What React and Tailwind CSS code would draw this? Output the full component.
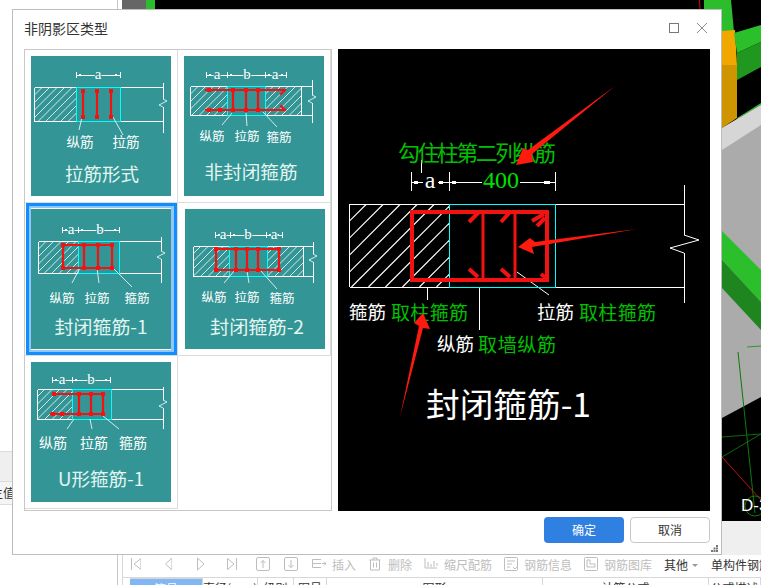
const RED = '#f21212'
const CYAN = '#00ffff'
const TEAL = '#339595'
const SERIF = "'Liberation Serif', serif"

const cards = [
  {
    title: '拉筋形式', titleX: 71, titleY: 117, titleW: 74,
    wall: [3.5, 132, 31, 65], cyan: [45, 89], hatch: [[3.5, 45]],
    post: [132, 27, 77], breakY: 47,
    dimY: 19, ticks: [45, 89], dims: [['a', 67]],
    labels: [['纵筋', 49, 85], ['拉筋', 95, 85]], labelSize: 13.5,
    leaders: [[51, 61, 48, 74], [82, 61, 92, 79]],
    ties: [[52, 35, 52, 61], [66, 35, 66, 61], [80, 35, 80, 61]],
  },
  {
    title: '非封闭箍筋', titleX: 67, titleY: 115, titleW: 93,
    wall: [6.5, 128, 30, 59], wallEnd: 117.5, cyan: [43.5, 81.5], hatch: [[6.5, 43.5], [81.5, 117.5]],
    post: [128, 24, 67], breakY: 43,
    dimY: 19, ticks: [22, 43, 81, 102], dims: [['a', 33], ['b', 63], ['a', 91]],
    labels: [['纵筋', 28, 79], ['拉筋', 63, 79], ['箍筋', 95, 80]], labelSize: 12.5,
    leaders: [[48, 57, 38, 69], [62, 57, 63, 70], [79, 56, 93, 71]],
    ties: [[22, 34, 101, 34], [22, 54, 101, 54], [49, 34, 49, 54], [62, 34, 62, 54], [74, 34, 74, 54], [101, 34, 97, 38], [101, 54, 97, 50]],
    marks: [[25, 34], [25, 54], [36, 54]],
  },
  {
    title: '封闭箍筋-1', titleX: 70, titleY: 117, titleW: 93, selected: true,
    wall: [7.5, 130, 32, 64], cyan: [47, 88], hatch: [[7.5, 47]],
    post: [130, 28, 74], breakY: 46,
    dimY: 21, ticks: [31, 47, 88], dims: [['a', 40], ['b', 69]],
    labels: [['纵筋', 31, 88], ['拉筋', 66, 88], ['箍筋', 106, 88]], labelSize: 12.5,
    leaders: [[49, 59, 41, 74], [66, 59, 68, 74], [82, 59, 101, 78]],
    ties: [[32, 36, 81, 36], [32, 59, 81, 59], [32, 36, 32, 59], [81, 36, 81, 59], [53, 36, 53, 59], [67, 36, 67, 59]],
  },
  {
    title: '封闭箍筋-2', titleX: 72, titleY: 117, titleW: 94, nudge: true,
    wall: [8, 128, 37, 67], wallEnd: 118, cyan: [44, 82], hatch: [[8, 44], [82, 118]],
    post: [128, 33, 74], breakY: 49,
    dimY: 26, ticks: [30, 45, 81, 97], dims: [['a', 38], ['b', 63], ['a', 89]],
    labels: [['纵筋', 29, 87], ['拉筋', 62, 87], ['箍筋', 97, 88]], labelSize: 12.5,
    leaders: [[50, 61, 39, 74], [62, 62, 64, 74], [76, 62, 92, 80]],
    ties: [[31, 40, 94, 40], [31, 61, 94, 61], [31, 40, 31, 61], [94, 40, 94, 61], [51, 40, 51, 61], [62, 40, 62, 61], [73, 40, 73, 61]],
  },
  {
    title: 'U形箍筋-1', titleX: 70, titleY: 116, titleW: 86,
    wall: [6, 132, 27, 57], cyan: [41, 80], hatch: [[6, 41]],
    post: [132, 25, 67], breakY: 42,
    dimY: 18, ticks: [21, 41, 79], dims: [['a', 31], ['b', 60]],
    labels: [['纵筋', 22, 80], ['拉筋', 63, 80], ['箍筋', 102, 80]], labelSize: 14,
    leaders: [[43, 57, 36, 67], [59, 57, 61, 67], [72, 54, 88, 67]],
    ties: [[22, 32, 72, 32], [20, 52, 72, 52], [72, 32, 72, 52], [48, 32, 48, 52], [60, 32, 60, 52]],
    marks: [[23, 32], [22, 52], [31, 52]],
  },
]

const snap = v => Math.floor(v) + 0.5

function Hatch({ id, x0, x1, y0, y1, step, width = 0.8 }) {
  const lines = []
  const h = y1 - y0
  for (let x = x0 - h; x < x1 + h; x += step) {
    lines.push(<line key={x} x1={x} y1={y1} x2={x + h} y2={y0} stroke="#fff" strokeWidth={width} />)
  }
  return (
    <>
      <clipPath id={id}>
        <rect x={x0} y={y0} width={x1 - x0} height={h} />
      </clipPath>
      <g clipPath={`url(#${id})`}>{lines}</g>
    </>
  )
}

function CardDrawing({ card, index }) {
  const [x0, x1, y0, y1] = card.wall.map(snap)
  const [c0, c1] = card.cyan.map(snap)
  const [px, p0, p1] = card.post
  const by = card.breakY
  const ends = card.ties.filter(t => t[0] === t[2]).flatMap(t => [[t[0], t[1]], [t[0], t[3]]])
  return (
    <svg width="140" height="140" viewBox="0 0 140 140" className="block">
      <rect width="140" height="140" fill={TEAL} />
      {card.hatch.map((h, i) => (
        <Hatch key={i} id={`h${index}-${i}`} x0={h[0]} x1={h[1]} y0={y0} y1={y1} step={7.5} />
      ))}
      <g stroke="#fff" strokeWidth="1" fill="none" shapeRendering="crispEdges">
        <line x1={x0} y1={y0} x2={x1} y2={y0} />
        <line x1={x0} y1={y1} x2={x1} y2={y1} />
        <line x1={x0} y1={y0} x2={x0} y2={y1} />
        {card.wallEnd && <line x1={snap(card.wallEnd)} y1={y0} x2={snap(card.wallEnd)} y2={y1} />}
        <line x1={snap(px)} y1={p0} x2={snap(px)} y2={by - 4} />
        <line x1={snap(px)} y1={by + 4} x2={snap(px)} y2={p1} />
        <line x1={card.ticks[0]} y1={snap(card.dimY)} x2={card.ticks[card.ticks.length - 1]} y2={snap(card.dimY)} />
        {card.ticks.map(t => (
          <line key={t} x1={snap(t)} y1={card.dimY - 3} x2={snap(t)} y2={card.dimY + 3} />
        ))}
      </g>
      <polyline points={`${px},${by - 4} ${px + 4},${by - 2} ${px - 4},${by + 2} ${px},${by + 4}`} stroke="#fff" strokeWidth="0.8" fill="none" />
      {card.ticks.map((t, i) => (
        <rect key={t} x={i === card.ticks.length - 1 ? t - 5 : t + 3} y={card.dimY - 1} width="2" height="2" fill="#fff" />
      ))}
      <rect x={c0} y={y0} width={c1 - c0} height={y1 - y0} fill="none" stroke={CYAN} strokeWidth="1" shapeRendering="crispEdges" />
      {card.leaders.map((l, i) => (
        <line key={i} x1={l[0]} y1={l[1]} x2={l[2]} y2={l[3]} stroke="#fff" strokeWidth="0.8" />
      ))}
      {card.ties.map((t, i) => (
        <line key={i} x1={t[0]} y1={t[1]} x2={t[2]} y2={t[3]} stroke={RED} strokeWidth="2.2" strokeLinecap="square" />
      ))}
      <g fill={RED}>
        {ends.map((e, i) => <rect key={i} x={e[0] - 2} y={e[1] - 2} width="4" height="4" />)}
        {(card.marks || []).map((e, i) => <rect key={i} x={e[0] - 2} y={e[1] - 2} width="4" height="4" />)}
      </g>
      {card.dims.map((d, i) => (
        <text key={i} x={d[1]} y={card.dimY - 1} fill="#fff" fontSize="15" fontFamily={SERIF} textAnchor="middle" dominantBaseline="central" stroke={TEAL} strokeWidth="2" paintOrder="stroke">
          {d[0]}
        </text>
      ))}
      {card.labels.map((l, i) => (
        <text key={i} x={l[1]} y={l[2]} fill="#fff" fontSize={card.labelSize} textAnchor="middle" dominantBaseline="central">
          {l[0]}
        </text>
      ))}
      <text x={card.titleX} y={card.titleY} fill="#e4f6f2" fontSize="18" textAnchor="middle" dominantBaseline="central" textLength={card.titleW} lengthAdjust="spacingAndGlyphs">
        {card.title}
      </text>
    </svg>
  )
}

function Arrow({ points }) {
  return <polygon points={points} fill="#ff1a10" />
}

function Preview() {
  const green = '#00c000'
  return (
    <svg width="372" height="462" viewBox="0 0 372 462" className="block bg-black">
      <Hatch id="preview-hatch" x0={11.5} x1={111} y0={155} y1={238} step={17} width={1.2} />
      <g stroke="#fff" strokeWidth="1" fill="none" shapeRendering="crispEdges">
        <line x1="11.5" y1="155.5" x2="346" y2="155.5" />
        <line x1="11.5" y1="238.5" x2="346" y2="238.5" />
        <line x1="11.5" y1="155" x2="11.5" y2="238" />
        <line x1="346.5" y1="136" x2="346.5" y2="186" />
        <line x1="346.5" y1="204" x2="346.5" y2="254" />
        <line x1="83.5" y1="111" x2="83.5" y2="124" />
        <line x1="89.5" y1="238" x2="89.5" y2="251" />
        <line x1="141.5" y1="238" x2="141.5" y2="281" />
        <line x1="73.5" y1="123" x2="73.5" y2="142" />
        <line x1="111.5" y1="123" x2="111.5" y2="142" />
        <line x1="217.5" y1="123" x2="217.5" y2="142" />
        <line x1="73.5" y1="133.5" x2="85" y2="133.5" />
        <line x1="100" y1="133.5" x2="111" y2="133.5" />
        <line x1="111.5" y1="133.5" x2="144" y2="133.5" />
        <line x1="182" y1="133.5" x2="217" y2="133.5" />
      </g>
      <polyline points="346,186 361,191 332,199 346,204" stroke="#fff" strokeWidth="1" fill="none" />
      <line x1="179" y1="223" x2="211" y2="246" stroke="#fff" strokeWidth="1" />
      <g fill="#fff">
        <rect x="76" y="132" width="4" height="3" />
        <rect x="101" y="132" width="4" height="3" />
        <rect x="114" y="132" width="4" height="3" />
        <rect x="206" y="132" width="6" height="3" />
      </g>
      <rect x="111.5" y="155.5" width="105.5" height="83" fill="none" stroke={CYAN} strokeWidth="1" shapeRendering="crispEdges" />

      <g stroke={RED} strokeWidth="4" fill="none">
        <rect x="74" y="163" width="135" height="68" />
        <line x1="145" y1="163" x2="145" y2="231" strokeWidth="3" />
        <line x1="177" y1="163" x2="177" y2="231" strokeWidth="3" />
        <line x1="141" y1="163" x2="131" y2="173" />
        <line x1="172" y1="163" x2="163" y2="173" />
        <line x1="206" y1="165" x2="194" y2="172" />
        <line x1="207" y1="169" x2="199" y2="177" />
        <line x1="140" y1="228" x2="131" y2="220" />
        <line x1="172" y1="228" x2="163" y2="220" />
        <line x1="208" y1="229" x2="203" y2="225" />
      </g>

      <text x="60" y="102" fill={green} fontSize="22" dominantBaseline="central" textLength="158">勾住柱第二列纵筋</text>
      <text x="92" y="131" fill="#fff" fontSize="24" fontFamily={SERIF} textAnchor="middle" dominantBaseline="central">a</text>
      <text x="163" y="131" fill="#00e000" fontSize="24" fontFamily={SERIF} textAnchor="middle" dominantBaseline="central">400</text>

      <text x="11" y="262" fill="#fff" fontSize="18.5" dominantBaseline="central">箍筋</text>
      <text x="53" y="262" fill={green} fontSize="19" dominantBaseline="central" textLength="77">取柱箍筋</text>
      <text x="199" y="262" fill="#fff" fontSize="18.5" dominantBaseline="central">拉筋</text>
      <text x="241" y="262" fill={green} fontSize="19" dominantBaseline="central" textLength="77">取柱箍筋</text>
      <text x="99" y="294" fill="#fff" fontSize="18.5" dominantBaseline="central">纵筋</text>
      <text x="140" y="294" fill={green} fontSize="19" dominantBaseline="central" textLength="78">取墙纵筋</text>
      <text x="88" y="354" fill="#fff" fontSize="33" dominantBaseline="central" textLength="165" lengthAdjust="spacingAndGlyphs">封闭箍筋-1</text>

      <Arrow points="277,37 190,101 185,99 178,116 195,113 194,105" />
      <Arrow points="299,180 197,193 192,189 180,198 196,205 194,198" />
      <Arrow points="62,368 81,277 76,274 85,264 92,280 85,279" />
    </svg>
  )
}

// background 3d view behind the dialog
function Scene() {
  return (
    <svg width="639" height="521" viewBox="122 0 639 521" className="block bg-black">
      <rect x="122" y="0" width="24" height="30" fill="#666" />
      <rect x="146" y="0" width="9" height="30" fill="#2bbd2b" />
      <line x1="699.5" y1="0" x2="700" y2="10" stroke="#d00" />
      <polygon points="704,0 731,0 734,32 722,32 704,32" fill="#2bbd2b" />
      <polygon points="722,31 735,30 737,65 722,65" fill="#f0a800" />
      <polygon points="722,65 737,65 737,118 722,128" fill="#cf9500" />
      <polygon points="734,33 761,25 761,42 737,53" fill="#2bc02b" />
      <polygon points="737,53 761,42 761,67 737,80" fill="#209820" />
      <polygon points="737,118 761,103 761,105 737,119" fill="#2bc02b" />
      <polygon points="722,128 761,105 761,397 722,418" fill="#ababab" />
      <polygon points="722,128 761,105 761,125 722,150" fill="#d6d6d6" />
      <polygon points="722,231 761,270 761,302 722,260" fill="#2bc02b" />
      <polygon points="722,260 761,302 761,330 722,288" fill="#1f851f" />
      <line x1="747" y1="347" x2="761" y2="346" stroke="#2e9a2e" />
      <line x1="738" y1="352" x2="755" y2="513" stroke="#0c7a0c" />
      <line x1="722" y1="437" x2="761" y2="434" stroke="#0c6a0c" />
      <line x1="722" y1="457" x2="761" y2="434" stroke="#0c6a0c" />
      <line x1="722" y1="457" x2="761" y2="500" stroke="#c81010" />
      <circle cx="755" cy="506" r="10" fill="none" stroke="#0c7a0c" />
      <text x="741" y="505" fill="#fff" fontSize="17" fontFamily="'Liberation Sans', sans-serif" dominantBaseline="central">D-3</text>
    </svg>
  )
}

const toolStroke = { stroke: '#bdbdbd', strokeWidth: 1, fill: 'none' }

function Ico({ w = 14, children, className = '' }) {
  return (
    <svg width={w} height="14" viewBox={`0 0 ${w} 14`} className={`shrink-0 -translate-y-[1px] ${className}`} {...toolStroke}>
      {children}
    </svg>
  )
}

function ToolText({ children, className = '' }) {
  return <span className={`text-[12px] leading-none text-[#bdbdbd] whitespace-nowrap ${className}`}>{children}</span>
}

function Toolbar() {
  return (
    <div className="h-[22px] flex items-center bg-white border-l border-[#d8d8d8] overflow-hidden pl-[8px] pb-[2px]">
      <Ico w={10}><path d="M0.5 1v12M10 1.5L3 7l7 5.5z" /></Ico>
      <Ico w={7} className="ml-[24px]"><path d="M7 1L0.5 7 7 13z" /></Ico>
      <Ico w={7} className="ml-[25px]"><path d="M0.5 1L7 7 0.5 13z" /></Ico>
      <Ico w={10} className="ml-[23px]"><path d="M0.5 1.5L7 7l-6.5 5.5zM9.5 1v12" /></Ico>
      <Ico className="ml-[19px]"><rect x="0.5" y="0.5" width="13" height="13" rx="1.5" /><path d="M7 11V3.5M4.5 6L7 3.5 9.5 6" /></Ico>
      <Ico className="ml-[14px]"><rect x="0.5" y="0.5" width="13" height="13" rx="1.5" /><path d="M7 3v7.5M4.5 8L7 10.5 9.5 8" /></Ico>
      <Ico className="ml-[14px]"><path d="M9 2.5H.5v8H9M.5 6.5H9M10 6.5h4M12 4.5l2 2-2 2" /></Ico>
      <ToolText className="ml-[6px]">插入</ToolText>
      <Ico w={12} className="ml-[13px]"><path d="M0.5 3h11M4 3V1h4v2M1.5 3v10h9V3M4.5 5.5v5M7.5 5.5v5" /></Ico>
      <ToolText className="ml-[7px]">删除</ToolText>
      <Ico className="ml-[12px]"><path d="M1 1v10h12M4 5v5M7 7v3M10 4v6M13 6v3" /></Ico>
      <ToolText className="ml-[6px]">缩尺配筋</ToolText>
      <Ico className="ml-[12px]"><rect x="0.5" y="0.5" width="13" height="13" rx="1" /><path d="M3 4h8M3 7h5M3 10h3M9 10l2 2 2-2" /></Ico>
      <ToolText className="ml-[6px]">钢筋信息</ToolText>
      <Ico className="ml-[12px]"><rect x="0.5" y="0.5" width="13" height="13" rx="1" /><path d="M3 3v7h8V7H6V3z" /></Ico>
      <ToolText className="ml-[6px]">钢筋图库</ToolText>
      <span className="ml-[12px] text-[12px] leading-none text-[#333] whitespace-nowrap">其他</span>
      <span className="ml-[4px] w-0 h-0 border-x-[3px] border-x-transparent border-t-[3px] border-t-[#999]" />
      <span className="ml-[13px] text-[12px] leading-none text-[#333] whitespace-nowrap">单构件钢筋</span>
    </div>
  )
}

const columns = [
  ['筋号', 'w-[73px] bg-[#7fb8f5] text-white border-t border-[#5f9fe6]'],
  ['直径(mm)', 'w-[55px]'],
  ['级别', 'w-[36px]'],
  ['图号', 'w-[33px]'],
  ['图形', 'w-[216px]'],
  ['计算公式', 'w-[166px]'],
  ['公式描述', 'flex-1'],
]

function TableHead() {
  return (
    <div className="h-[8px] flex border-t border-l border-[#d8d8d8] pl-[7px] bg-white overflow-hidden">
      {columns.map(([label, cls]) => (
        <div key={label} className={`${cls} shrink-0 h-[20px] pt-[2px] border-r border-[#d8d8d8] text-[12px] leading-[16px] text-center text-[#333] whitespace-nowrap overflow-hidden`}>
          {label}
        </div>
      ))}
    </div>
  )
}

function Dialog() {
  return (
    <div className="absolute left-[12px] top-[9px] w-[710px] h-[546px] bg-white border border-[#bdbdbd]">
      <div className="h-[39px] pl-[11px] pr-[13px] flex items-center justify-between pb-[3px]">
        <span className="text-[14px] text-[#333]">非阴影区类型</span>
        <div className="flex items-center gap-[17px]">
          <span className="block w-[10px] h-[10px] border border-[#777]" />
          <svg width="12" height="12" viewBox="0 0 12 12" stroke="#8a8a8a" strokeWidth="1">
            <path d="M1 1l10 10M11 1L1 11" />
          </svg>
        </div>
      </div>
      <div className="px-[11px] flex gap-[6px]">
        <div className="w-[308px] h-[462px] border border-[#c8c8c8] grid grid-cols-[153px_153px] auto-rows-[153px] content-start">
          {cards.map((card, i) => (
            <div key={card.title} className={`relative border-r border-b border-[#dcdcdc] pt-[6px] ${card.nudge ? 'pl-[7px]' : 'pl-[6px]'}`}>
              <CardDrawing card={card} index={i} />
              {card.selected && (
                <div className="absolute left-[1px] top-0 w-[151px] h-[152px] border-[3px] border-[#0f8fff]">
                  <div className="w-full h-full border-2 border-r-[3px] border-[#92c5f8]" />
                </div>
              )}
            </div>
          ))}
        </div>
        <Preview />
      </div>
      <div className="pt-[6px] pr-[11px] flex justify-end gap-[6px]">
        <button className="w-[80px] h-[26px] rounded-[4px] bg-[#2f80e0] text-white text-[12px]">确定</button>
        <button className="w-[80px] h-[26px] rounded-[4px] bg-white border border-[#c8c8c8] text-[#333] text-[12px]">取消</button>
      </div>
      <svg width="7" height="7" viewBox="0 0 7 7" className="absolute right-[3px] bottom-[2px]" fill="#777">
        <rect x="5" y="0" width="2" height="2" />
        <rect x="2.5" y="2.5" width="2" height="2" />
        <rect x="5" y="2.5" width="2" height="2" />
        <rect x="0" y="5" width="2" height="2" />
        <rect x="2.5" y="5" width="2" height="2" />
        <rect x="5" y="5" width="2" height="2" />
      </svg>
    </div>
  )
}

export default function App() {
  return (
    <div className="relative w-[761px] h-[585px] overflow-hidden bg-white flex font-['Noto_Sans_CJK_SC',sans-serif]">
      {/* left panel behind the dialog */}
      <div className="w-[118px] shrink-0 border-r border-[#c8c8c8] pt-[451px]">
        <div className="h-[30px] bg-[#efefef] border-t border-[#dcdcdc]" />
        <div className="h-[24px] bg-[#f5f5f5] border-y border-[#dcdcdc] flex items-center">
          <span className="w-[15px] flex justify-end overflow-hidden whitespace-nowrap text-[12px] text-[#333]">主值</span>
        </div>
      </div>
      <div className="w-[4px] shrink-0" />
      <div className="flex-1 min-w-0 flex flex-col">
        <Scene />
        <div className="h-[34px] bg-[#efefef] border-l border-[#d8d8d8]" />
        <Toolbar />
        <TableHead />
      </div>
      <Dialog />
    </div>
  )
}
